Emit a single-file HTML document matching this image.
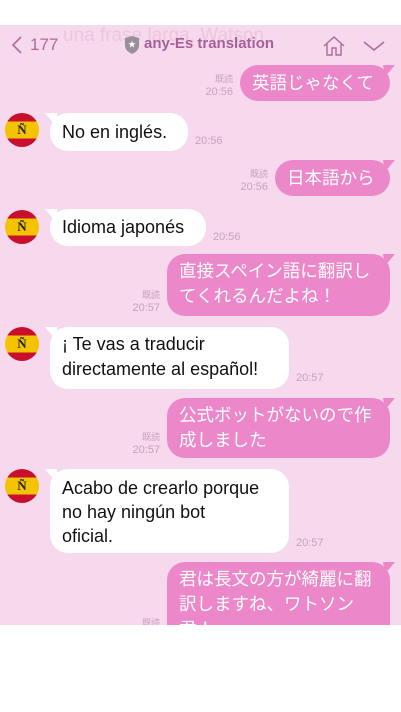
<!DOCTYPE html>
<html><head><meta charset="utf-8"><style>
*{margin:0;padding:0;box-sizing:border-box}
body{width:401px;height:712px;background:#fff;position:relative;overflow:hidden;font-family:"Liberation Sans","Noto Sans CJK JP",sans-serif}
.bg{position:absolute;left:0;top:25px;width:401px;height:600px;background:#f6d9ed;overflow:hidden}
.b{position:absolute;font-size:17.5px;line-height:26px;padding:5px 12px;border-radius:18px;white-space:nowrap}
.r{background:#ec88ca;color:#fff}
.l{background:#fff;color:#111;font-size:18px}
.r:after{content:"";position:absolute;right:-5px;top:0;width:12px;height:10px;background:#ec88ca;border-radius:0 0 0 10px;clip-path:polygon(0 0,100% 0,30% 100%,0 100%)}
.l:before{content:"";position:absolute;left:-5px;top:0;width:12px;height:10px;background:#fff;clip-path:polygon(0 0,100% 0,100% 100%,70% 100%)}
.t{position:absolute;font-size:11px;color:#c9a2bb;text-align:right;line-height:13px}
.t small{font-size:9px;display:block}
.av{position:absolute;left:5px;width:34px;height:34px;border-radius:50%;background:linear-gradient(#c8102e 0 25%,#f5c400 25% 75%,#c8102e 75%);text-align:center;font:bold 13px/34px "Liberation Serif",serif;color:#222}
</style></head><body>
<div class="bg">
<div style="position:absolute;left:63px;top:0px;font-size:19px;color:#ecc6dd">una frase larga, Watson</div>
<svg style="position:absolute;left:10px;top:10px" width="14" height="20"><path d="M11 2 L3 10 L11 18" stroke="#b06a9a" stroke-width="1.6" fill="none"/></svg>
<div style="position:absolute;left:30px;top:10px;font-size:17px;color:#b06a9a">177</div>
<svg style="position:absolute;left:124px;top:11px" width="16" height="18"><path d="M1 2 L8 0 L15 2 L15 9 Q15 15 8 18 Q1 15 1 9Z" fill="#9a8e98"/><text x="8" y="11" font-size="8" fill="#fff" text-anchor="middle">★</text></svg>
<div style="position:absolute;left:144px;top:10px;font-size:15px;font-weight:bold;color:#a8609a">any-Es translation</div>
<svg style="position:absolute;left:322px;top:9px" width="24" height="24"><path d="M2 12 L12 3 L22 12 M5 10 V21 H10 V14 H14 V21 H19 V10" stroke="#b06a9a" stroke-width="1.4" fill="none"/></svg>
<svg style="position:absolute;left:362px;top:14px" width="24" height="14"><path d="M2 3 L12 11 L22 3" stroke="#b06a9a" stroke-width="1.6" fill="none"/></svg>

<div class="b r" style="left:240px;top:40px;width:150px;height:36px">英語じゃなくて</div>
<div class="t" style="right:168px;top:48px"><small>既読</small>20:56</div>

<div class="av" style="top:88px">Ñ</div>
<div class="b l" style="left:50px;top:88px;width:138px;height:38px;padding-top:6px">No en inglés.</div>
<div class="t" style="left:195px;top:110px">20:56</div>

<div class="b r" style="left:275px;top:135px;width:115px;height:36px">日本語から</div>
<div class="t" style="right:133px;top:143px"><small>既読</small>20:56</div>

<div class="av" style="top:185px">Ñ</div>
<div class="b l" style="left:50px;top:184px;width:156px;height:37px">Idioma japonés</div>
<div class="t" style="left:213px;top:206px">20:56</div>

<div class="b r" style="left:167px;top:229px;width:223px;height:62px;line-height:25px">直接スペイン語に翻訳し<br>てくれるんだよね！</div>
<div class="t" style="right:241px;top:264px"><small>既読</small>20:57</div>

<div class="av" style="top:302px">Ñ</div>
<div class="b l" style="left:50px;top:302px;width:239px;height:62px;line-height:25px">¡ Te vas a traducir<br>directamente al español!</div>
<div class="t" style="left:296px;top:347px">20:57</div>

<div class="b r" style="left:167px;top:373px;width:223px;height:60px;line-height:25px">公式ボットがないので作<br>成しました</div>
<div class="t" style="right:241px;top:406px"><small>既読</small>20:57</div>

<div class="av" style="top:444px">Ñ</div>
<div class="b l" style="left:50px;top:444px;width:239px;height:84px;line-height:24px;padding-top:7px">Acabo de crearlo porque<br>no hay ningún bot<br>oficial.</div>
<div class="t" style="left:296px;top:512px">20:57</div>

<div class="b r" style="left:167px;top:537px;width:223px;height:90px;line-height:25px">君は長文の方が綺麗に翻<br>訳しますね、ワトソン<br>君！</div>
<div class="t" style="right:241px;top:592px"><small>既読</small></div>
</div>
</body></html>
